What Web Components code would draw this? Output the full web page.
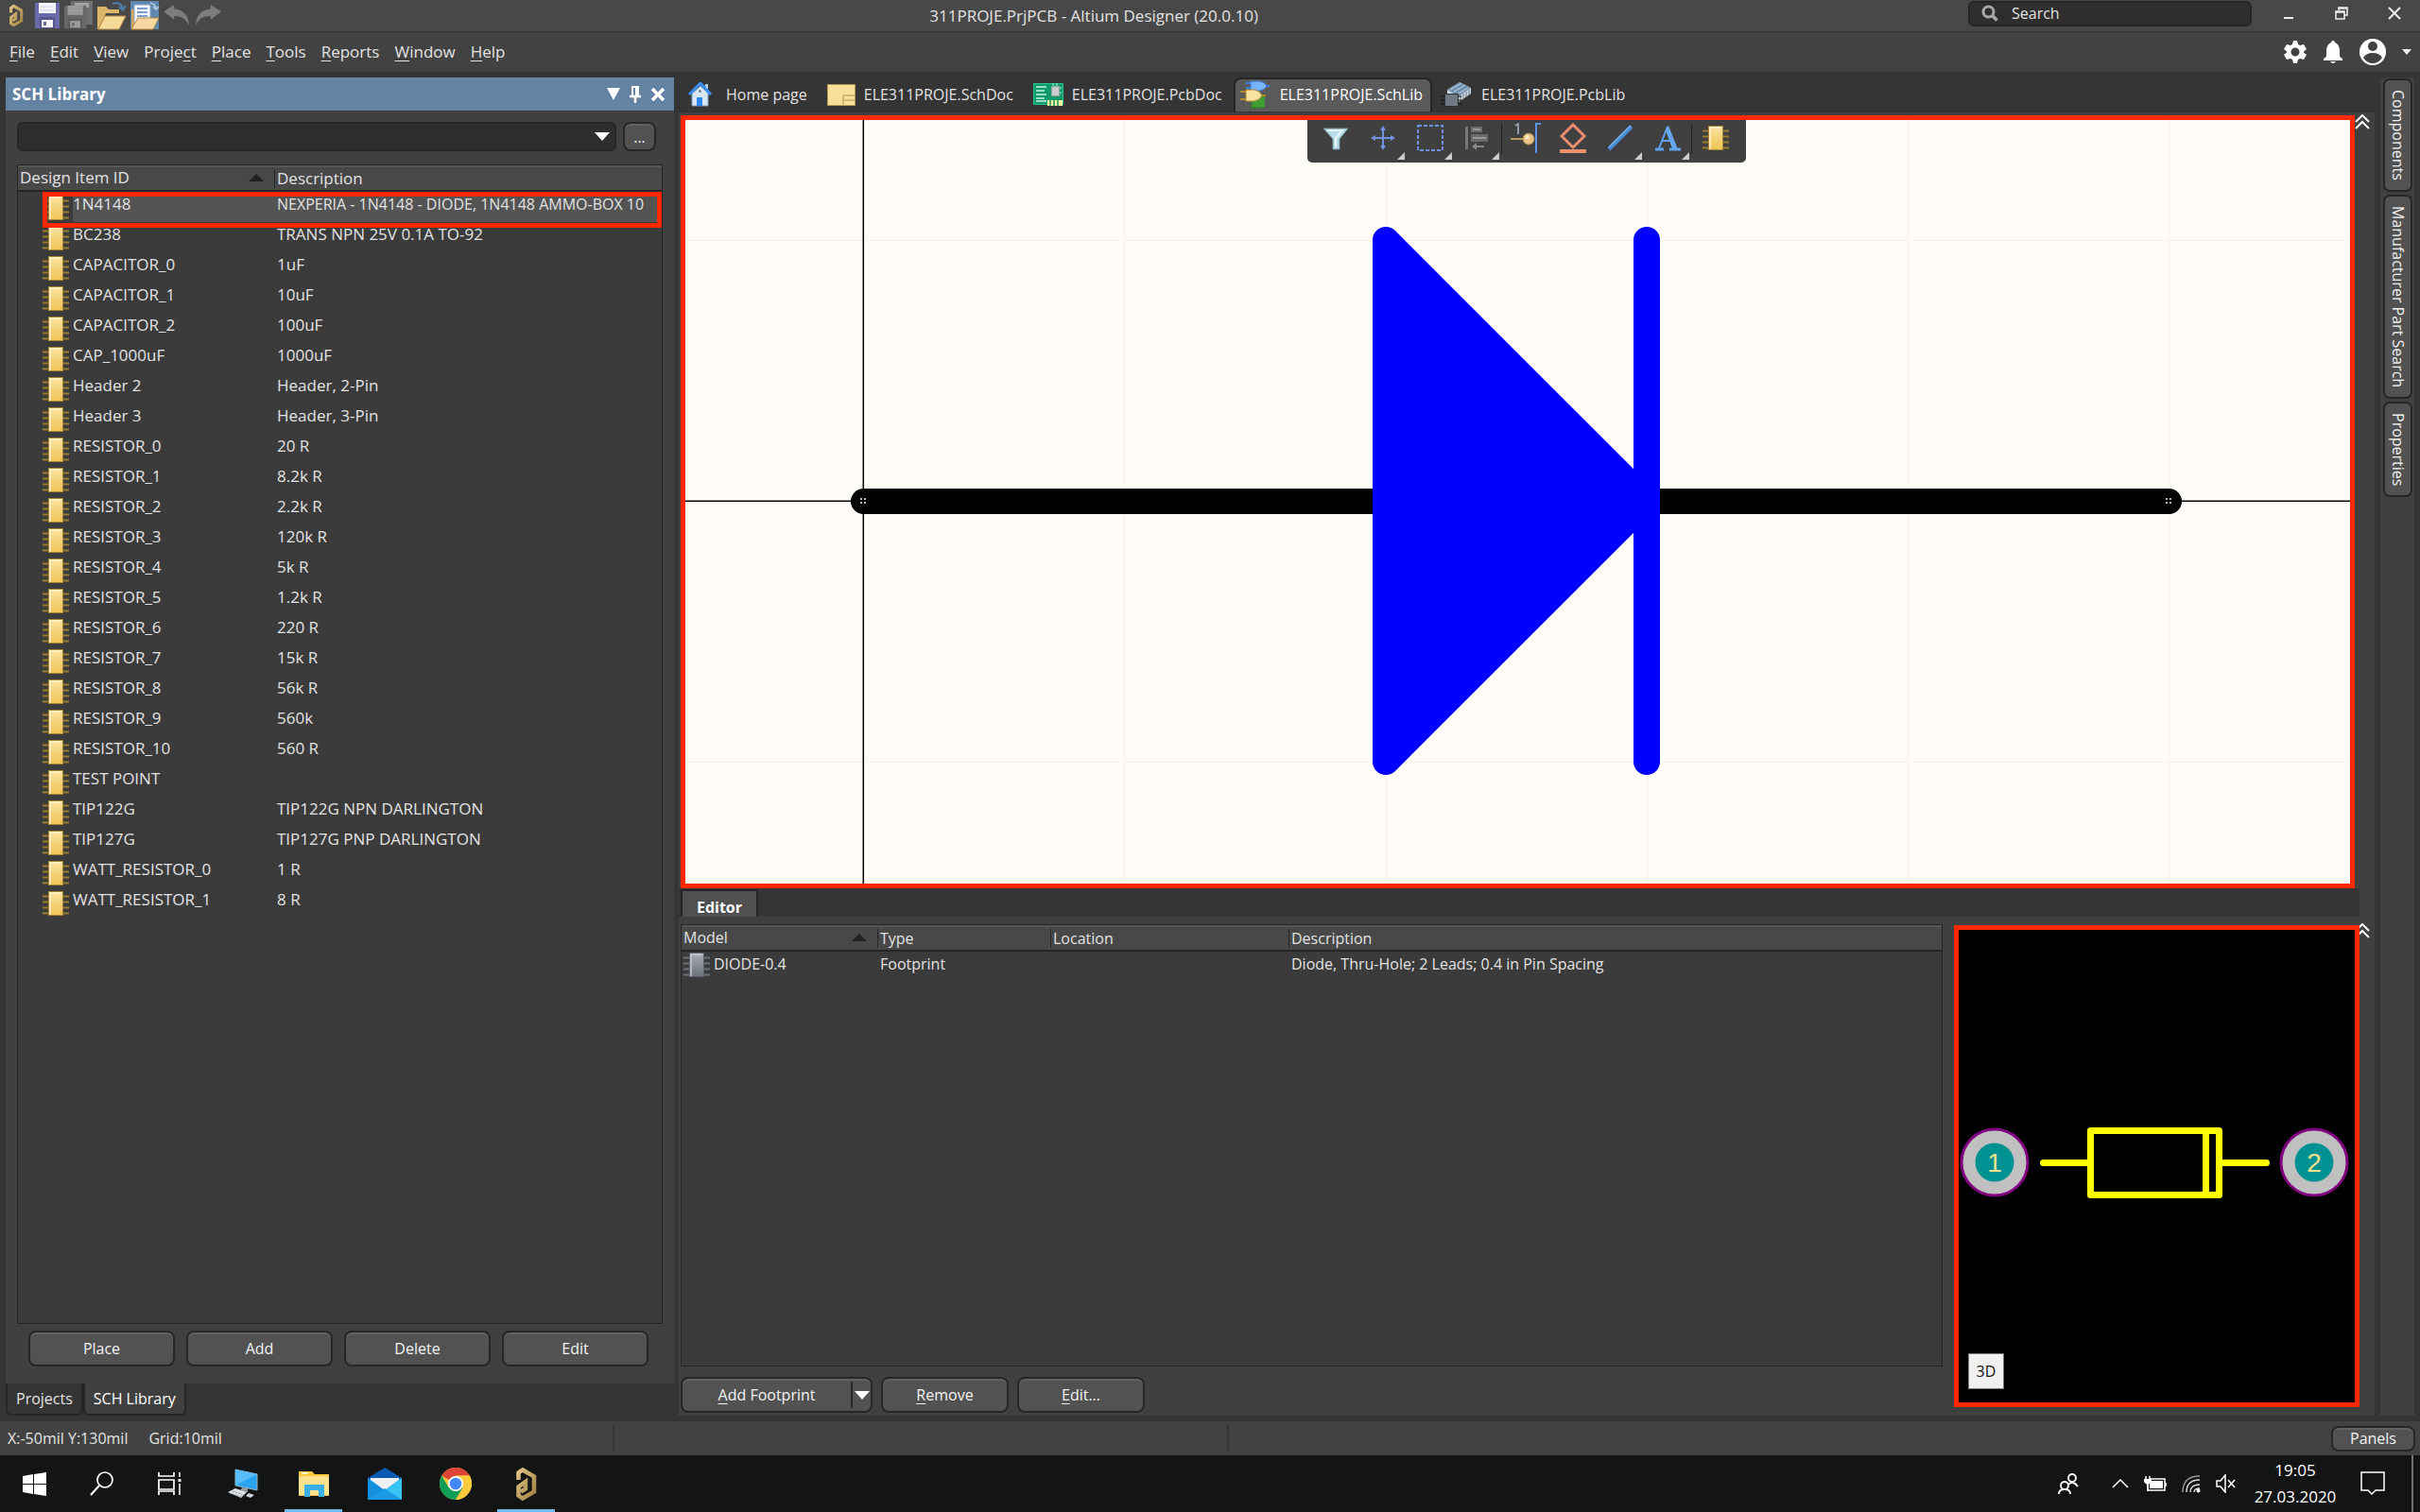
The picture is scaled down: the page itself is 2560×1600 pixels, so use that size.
<!DOCTYPE html>
<html lang="en">
<head>
<meta charset="utf-8">
<title>311PROJE.PrjPCB - Altium Designer (20.0.10)</title>
<style>
html,body{margin:0;height:100%}
body{font:16px/24px "Open Sans","Noto Sans",sans-serif;color:#e2e2e2;background:#353535}
</style>
</head>
<body>
<altium-app></altium-app>
<script>
const BASE = `
*{box-sizing:border-box}
button,input,select{font:inherit;color:inherit;margin:0;padding:0;border:0;background:none;outline:0}
button{display:inline-flex;align-items:center;justify-content:center;white-space:nowrap}
u{text-underline-offset:3px;text-decoration-thickness:1px}
table{border-collapse:separate;border-spacing:0;table-layout:fixed;width:100%}
th,td{padding:0;font-weight:400;text-align:left;vertical-align:top;white-space:nowrap;overflow:hidden}
`;
function define(name, css, html, after){
  const t = document.createElement('template');
  t.innerHTML = `<style>${BASE}${css}</style>${html}`;
  customElements.define(name, class extends HTMLElement{
    constructor(){
      super();
      this.attachShadow({mode:'open'}).append(t.content.cloneNode(true));
    }
    connectedCallback(){ if(after) after(this, this.shadowRoot); }
  });
}

const altium = `<defs><linearGradient id="g" x2="1" y2="1"><stop stop-color="#e0c585"/><stop offset="1" stop-color="#a08041"/></linearGradient></defs><path d="M3.500 14V6.500L8 3.500l12 7v16L8 33.500l-4.500-3v-9L11 16v7.500l-5 3" fill="none" stroke="url(#g)" stroke-width="4.500"/>`;
const chip = (pin,a,b,edge,hi) => `<defs><linearGradient id="c" x2="0" y2="1"><stop stop-color="${a}"/><stop offset="1" stop-color="${b}"/></linearGradient></defs><path d="M0 6.500h28M0 12.500h28M0 18.500h28M0 24.500h28" stroke="${pin}" stroke-width="2"/><rect x="6.500" y="1.500" width="15" height="25" fill="url(#c)" stroke="${edge}"/><path d="M8 26V3h12" fill="none" stroke="${hi}" stroke-width="1.500"/>`;
const floppy = (c,l,x) => `<path d="M1 1h26v27H1z" fill="${c}"/><path d="M5 1h18v11H5z" fill="${l}"/><path d="M7 5h14M7 9h14" stroke="${c}" stroke-opacity=".25"/><path d="M6 16h16v12H6z" fill="${x}"/><path d="M8 19h12v8H8z" fill="${l}"/><path d="M10 21h3v4h-3z" fill="${c}"/>`;
const folder = (b) => `<path d="M1 ${b}h9l3 3h11v4H10L3 30H1z" fill="#d9b66a"/><path d="M9 16h22l-7 14H2z" fill="#f6d899" stroke="#b28b41"/>`;
const ICONS = {
  altium:[16,25,altium,'0 0 23 37'],
  'altium-big':[23,37,altium],
  save:[28,29,floppy('#6b6bab','#f6f6fb','#55558f')],
  saveall:[32,31,`<path d="M8 0h23v25H8z" fill="#707070"/><path d="M12 2h15v5H12z" fill="#a5a5a5"/><g transform="translate(0 4) scale(.9)">${floppy('#686868','#9d9d9d','#5c5c5c')}</g>`],
  open:[32,31,`${folder(6)}<path d="M17 3q9-3 11 5M24 6l4 4 3-5" fill="none" stroke="#4e7fa8" stroke-width="2"/>`],
  openprj:[32,31,`<path d="M1 0h30v30H1z" fill="#5f86ad"/><path d="M2 9h4v20H2z" fill="#d5a55c"/><path d="M5 4h17v20H5z" fill="#f4f8ff" stroke="#8aa2cf"/><path d="M8 8h11M8 12h11M8 16h11" stroke="#5a7cc4" stroke-width="1.500"/><path d="M22 2q6 1 6 7M25 6l3 3 3-3" fill="none" stroke="#b9cce0" stroke-width="1.500"/><path d="M9 18h22l-6 12H2z" fill="#f9d7a0" stroke="#b28b41"/>`],
  undo:[30,26,`<path d="M1 9l12-8v5q16 1 17 19-5-12-17-11v4z" fill="#7d7d7d"/>`,'0 0 32 28'],
  redo:[30,26,`<path d="M31 9L19 1v5Q3 7 2 25q5-12 17-11v4z" fill="#7d7d7d"/>`,'0 0 32 28'],
  search:[18,18,`<circle cx="7.500" cy="7.500" r="5.500" fill="none" stroke="#a8a8a8" stroke-width="3"/><path d="M11.500 11.500l5 5" stroke="#a8a8a8" stroke-width="3.500"/>`],
  min:[14,14,`<path d="M2 12h10" stroke="#eee" stroke-width="2"/>`],
  restore:[14,14,`<path d="M4 4V1h9v8h-3" fill="none" stroke="#eee" stroke-width="1.500"/><path d="M1 5h9v8H1zM1 6h9M4 2h9" fill="none" stroke="#eee" stroke-width="1.500"/>`],
  close:[14,14,`<path d="M1 1l12 12M13 1L1 13" stroke="#eee" stroke-width="2"/>`],
  gear:[24,24,`<path fill-rule="evenodd" d="M10 0h4l1 4 2 1 4-1 3 5-3 2.500v1L24 15l-3 5-4-1-2 1-1 4h-4l-1-4-2-1-4 1-3-5 3-2.500v-1L0 9l3-5 4 1 2-1zM12 7.500a4.500 4.500 0 1 0 0 9 4.500 4.500 0 0 0 0-9z" fill="#fff"/>`],
  bell:[22,24,`<path d="M11 0q2 0 2 2 5 2 5 9v5q0 2 3 3v2H1v-2q3-1 3-3v-5q0-7 5-9 0-2 2-2zM8 22h6q-3 4-6 0z" fill="#fff"/>`],
  user:[28,28,`<circle cx="14" cy="14" r="14" fill="#fff"/><circle cx="14" cy="8" r="5" fill="#424242"/><path d="M4 20q3-5 10-5t10 5q-4 6-10 6T4 20z" fill="#424242"/>`],
  caret:[10,6,`<path d="M0 0h10L5 6z" fill="#eee"/>`],
  'caret-big':[16,9,`<path d="M0 0h16L8 9z" fill="#fff"/>`],
  dropdown:[14,13,`<path d="M0 0h14L7 13z" fill="#fff"/>`],
  pin:[12,20,`<path d="M2 1h8v11H2z" fill="#fff"/><path d="M4 3h2v8H4z" fill="#6483a3"/><path d="M0 12h12M6 12v7" stroke="#fff" stroke-width="2.500"/>`],
  x:[16,16,`<path d="M2 2l12 12M14 2L2 14" stroke="#fff" stroke-width="3.500"/>`],
  sort:[16,8,`<path d="M0 8h16L8 0z" fill="#202020"/>`],
  chip:[28,28,chip('#9c7d2e','#fbe2a0','#f0c455','#a88534','#fff3cf')],
  chipgrey:[28,28,chip('#6c727c','#a9acb5','#69707a','#596069','#c8cad0')],
  home:[26,26,`<path d="M4 12v13h17V12L13 4z" fill="#d9e7f5" stroke="#7d9cb8"/><path d="M18 2h3v8h-3z" fill="#bccad8"/><path d="M1 13L13 1l11 12" fill="none" stroke="#3b8ff0" stroke-width="3"/><path d="M9 16h6v9H9z" fill="#2e86ee"/><circle cx="12.500" cy="9.500" r="1.500" fill="#6d8499"/>`],
  sch:[30,23,`<path d="M.5.500h29v22H.5z" fill="#f8df97" stroke="#b99c55"/><path d="M17 22V12h12M17 17h12" fill="none" stroke="#b39448"/>`],
  pcb:[32,26,`<path d="M.5 1.500h31v22H.5z" fill="#0d9b6c" stroke="#2cc391"/><path d="M3 5h11M3 9h9M3 13h11M3 17h9M3 20h11" stroke="#c9f5df" stroke-width="1.500"/><path d="M19 4h9v11h-9z" fill="#c9ccce" stroke="#486"/><path d="M21 1v3M25 1v3M30 6h-2M30 11h-2" stroke="#9fe"/><path d="M15 19h16v6H15z" fill="#f2f6a0"/><path d="M18 19v6M22 19v6M26 19v6" stroke="#1a8a5a" stroke-width="1.500"/>`],
  schlib:[32,32,`<path d="M12 17h14v13H12z" fill="#3f9e34"/><path d="M12 18v12h14" fill="none" stroke="#2c7d25" stroke-width="2" stroke-dasharray="2 1.500"/><path d="M6 4h6M6 9h6M25 7h6" stroke="#3d7de0" stroke-width="2"/><path d="M11 2h10q5 1 7 5-2 4-7 5H11z" fill="#78b5ff" stroke="#3a7bdc"/><path d="M0 13h6M0 21h6M22 17h5" stroke="#b18a2c" stroke-width="2"/><path d="M6 11h9q6 1 8 6-2 5-8 6H6z" fill="#fae3a2" stroke="#b18a2c"/>`],
  pcblib:[34,28,`<path d="M7 9L20 1l12 6v6L19 22 7 15z" fill="#ccd7df"/><path d="M7 9L20 1l12 6-13 9z" fill="#6f8fae"/><path d="M10 9l12-7M14 11l12-7M17 14l12-7" stroke="#afc5d8" stroke-width="1.200"/><path d="M21 15v6M24 13v6M27 11v6M30 9v5" stroke="#6a7782"/><path d="M0 16h22M0 20h22M0 24h22" stroke="#111"/><path d="M4.500 13.500h14v13h-14z" fill="#707983" stroke="#2c2f33"/>`],
  filter:[28,28,`<path d="M1 4h26l-9 11v11h-7V15z" fill="#b9dde8" stroke="#7797a5"/><path d="M5 6h16l-7 8v10" fill="none" stroke="#e5f6fa" stroke-width="2"/>`],
  move:[28,28,`<path d="M14 3v22M3 14h22" stroke="#7291e0" stroke-width="2"/><path d="M14 1l-3 5h6zM14 27l-3-5h6zM1 14l5-3v6zM27 14l-5-3v6z" fill="#7291e0"/>`],
  select:[28,28,`<path d="M1 1h26v26H1z" fill="none" stroke="#7291e0" stroke-width="2" stroke-dasharray="4 2"/>`],
  align:[28,28,`<path d="M1 2h3v24H1z" fill="#777"/><path d="M7 2h12v6H7zM7 10h18v8H7z" fill="#6b6b6b"/><path d="M9 5h8M9 14h14" stroke="#999" stroke-width="2"/><path d="M8 23l5-4v3h8v2h-8v3z" fill="#888"/>`],
  pinplace:[32,32,`<path d="M0 17h18" stroke="#b39a62" stroke-width="2"/><circle cx="19" cy="17" r="6" fill="#e8c384" stroke="#a78a52"/><circle cx="17.500" cy="15" r="2.500" fill="#f6e3bd"/><path d="M27 32V1h5" fill="none" stroke="#5b91e8" stroke-width="2"/><path d="M5 3l3-2v11" fill="none" stroke="#8f9aa5" stroke-width="2"/>`],
  diamond:[28,32,`<path d="M14 2l12 12-12 12L2 14z" fill="none" stroke="#ec8f6d" stroke-width="3"/><path d="M0 30h28" stroke="#ec8f6d" stroke-width="4"/>`],
  line:[28,28,`<path d="M2 26L26 2" stroke="#4587cf" stroke-width="4"/><path d="M2 24L25 1" stroke="#6eabec" stroke-width="2"/>`],
  text:[28,28,`<path d="M14 2l9 22M14 2L5 25M8 17h11" stroke="#5fa3ee" stroke-width="2" fill="none"/><path d="M15 1l9 24h-5L12 6z" fill="#68a8f0"/><path d="M1 26h9M16 26h12" stroke="#5fa3ee" stroke-width="3"/>`],
  chevrons:[16,16,`<path d="M1 8l7-7 7 7M1 15l7-7 7 7" fill="none" stroke="#fff" stroke-width="2"/>`],
  win:[25,25,`<path d="M0 4l11-2v10H0zM12 2l13-2v12H12zM0 13h11v10L0 21zM12 13h13v12l-13-2z" fill="#fff"/>`],
  find:[26,26,`<circle cx="16" cy="9" r="8" fill="none" stroke="#fff" stroke-width="1.700"/><path d="M10 15L1 25" stroke="#fff" stroke-width="2"/>`],
  task:[26,24,`<path d="M1 0v4h16V0M1 8h16v10H1zM1 24v-4h16v4" fill="none" stroke="#fff" stroke-width="1.700"/><path d="M23 0v5M23 12v12" stroke="#fff" stroke-width="1.500"/><path d="M21.500 7h3v3h-3z" fill="#fff"/>`],
  pc:[34,32,`<path d="M9 1l23 5v17L9 18z" fill="#29a3f2" stroke="#9cb4c4"/><path d="M9 1l23 5L9 18z" fill="#59bcfa"/><path d="M16 20l6 1v4l-8-1z" fill="#909ba3"/><path d="M1 25l8-4 12 4-6 6z" fill="#dde2e6"/><path d="M3 26l13 4M6 24l12 4" stroke="#90979d" stroke-dasharray="2 1"/><path d="M23 26l6 2-4 3-5-2z" fill="#cfd5da"/>`],
  explorer:[32,27,`<path d="M0 0h14l3 3h15v23H0z" fill="#f8c83a"/><path d="M0 5h32v20H0z" fill="#ffe28d"/><path d="M3 2h7" stroke="#fff" stroke-width="1.500"/><path d="M6 27V14h21v13h-6v-7h-9v7z" fill="#39afe8"/>`],
  mail:[36,34,`<path d="M0 11L18 0l18 11v10H0z" fill="#0b5cb0"/><path d="M3 11h30v13H3z" fill="#f0f1f5"/><path d="M0 11l18 13L36 11v23H0z" fill="#1590e0"/><path d="M18 24l18-13v23z" fill="#38c4f5"/><path d="M0 34l18-12 18 12z" fill="#1b9ae8"/>`],
  chrome:[34,34,`<circle cx="17" cy="17" r="17" fill="#fbc93d"/><path d="M17 17L2.300 8.500A17 17 0 0 1 31.700 8.500H17z" fill="#db4437"/><path d="M2.300 8.500A17 17 0 0 0 17 34l7.400-12.500L17 17 9.600 21z" fill="#109d58"/><path d="M31.700 8.500A17 17 0 0 1 17 34l8-13-2-9-6-3.500z" fill="#fdcb3d"/><circle cx="17" cy="17" r="8" fill="#fff"/><circle cx="17" cy="17" r="6.300" fill="#4587f4"/>`],
  people:[22,24,`<g fill="none" stroke="#fff" stroke-width="1.800"><circle cx="15" cy="6" r="4"/><path d="M11 13q5-5 10 2"/><circle cx="7" cy="14" r="4"/><path d="M1 23q0-5 6-5t6 5"/></g>`],
  up:[18,10,`<path d="M1 9l8-8 8 8" fill="none" stroke="#fff" stroke-width="1.500"/>`],
  battery:[24,16,`<path d="M6 3h16v12H4V9" fill="none" stroke="#fff" stroke-width="1.500"/><path d="M8 5h12v8H6V9z" fill="#fff"/><path d="M23 7v4M2 0v4M6 0v4M4 8v8" stroke="#fff" stroke-width="1.500"/><path d="M0 3h8v3q-4 6-8 0z" fill="#fff"/>`],
  wifi:[20,20,`<g fill="none" stroke="#ddd" stroke-width="1.400"><path d="M1 19Q1 2 19 2" stroke="#999"/><path d="M5 19Q5 6 19 6"/><path d="M9 19q0-8 10-8"/><path d="M13 19q0-4 6-4"/></g><circle cx="17.500" cy="17.500" r="2" fill="#fff"/>`],
  mute:[22,20,`<path d="M1 7h4l5-6v18l-5-6H1zM13 6l7 8M20 6l-7 8" fill="none" stroke="#fff" stroke-width="1.500"/>`],
  note:[26,26,`<path d="M1 1h24v19H16l-4 4-4-4H1z" fill="none" stroke="#fff" stroke-width="1.500"/>`]
};
customElements.define('ui-icon', class extends HTMLElement{
  connectedCallback(){
    const [w,h,body,vb] = ICONS[this.getAttribute('name')];
    const root = this.shadowRoot || this.attachShadow({mode:'open'});
    root.innerHTML = `<style>:host{display:inline-flex;flex:none}svg{display:block}</style><svg width="${w}" height="${h}" viewBox="${vb||`0 0 ${w} ${h}`}" aria-hidden="true">${body}</svg>`;
  }
});

define('push-button', `
:host{display:flex;height:var(--h,38px)}
button{width:100%;border:2px solid #262626;border-radius:8px;background:#525252;box-shadow:inset 0 2px 1px #636363;color:#f2f2f2}
`, `<button type="button"><slot></slot></button>`);

define('title-bar', `
:host{display:grid;grid-template-columns:4fr auto 5fr;align-items:center;height:34px;background:#484848;border-bottom:1px solid #333}
.left{display:flex;align-items:center;gap:3px;padding-left:9px}
.left ui-icon:first-child{margin-right:8px}
h1{font:inherit;font-size:17px;margin:0}
.right{display:flex;align-items:center;justify-content:flex-end;gap:42px;padding:0 20px 5px 0}
label{display:flex;align-items:center;gap:14px;width:300px;height:27px;padding:0 12px;border:2px solid #262626;border-radius:6px;background:#2e2e2e;margin-right:-10px}
input{width:200px;height:22px;color:#e2e2e2}
input::placeholder{color:#e2e2e2;opacity:1}
`, `<div class="left"><ui-icon name="altium"></ui-icon><ui-icon name="save"></ui-icon><ui-icon name="saveall"></ui-icon><ui-icon name="open"></ui-icon><ui-icon name="openprj"></ui-icon><ui-icon name="undo"></ui-icon><ui-icon name="redo"></ui-icon></div>
<h1>311PROJE.PrjPCB - Altium Designer (20.0.10)</h1>
<div class="right"><label><ui-icon name="search"></ui-icon><input type="text" placeholder="Search" aria-label="Search"></label>
<button aria-label="Minimize"><ui-icon name="min"></ui-icon></button><button aria-label="Restore"><ui-icon name="restore"></ui-icon></button><button aria-label="Close"><ui-icon name="close"></ui-icon></button></div>`);

define('menu-bar', `
:host{display:flex;align-items:center;justify-content:space-between;height:42px;background:#424242;padding:0 9px 0 10px;font-size:17px}
nav{display:flex;gap:16px}
.acct{display:flex;align-items:center;gap:17px}
`, `<nav><button><span><u>F</u>ile</span></button><button><span><u>E</u>dit</span></button><button><span><u>V</u>iew</span></button><button><span>Proje<u>c</u>t</span></button><button><span><u>P</u>lace</span></button><button><span><u>T</u>ools</span></button><button><span><u>R</u>eports</span></button><button><span><u>W</u>indow</span></button><button><span><u>H</u>elp</span></button></nav>
<div class="acct"><button aria-label="Settings"><ui-icon name="gear"></ui-icon></button><button aria-label="Notifications"><ui-icon name="bell"></ui-icon></button><button aria-label="Account"><ui-icon name="user"></ui-icon></button><ui-icon name="caret"></ui-icon></div>`);

const PARTS = [
['1N4148','NEXPERIA - 1N4148 - DIODE, 1N4148 AMMO-BOX 10'],['BC238','TRANS NPN 25V 0.1A TO-92'],['CAPACITOR_0','1uF'],['CAPACITOR_1','10uF'],['CAPACITOR_2','100uF'],['CAP_1000uF','1000uF'],['Header 2','Header, 2-Pin'],['Header 3','Header, 3-Pin'],['RESISTOR_0','20 R'],['RESISTOR_1','8.2k R'],['RESISTOR_2','2.2k R'],['RESISTOR_3','120k R'],['RESISTOR_4','5k R'],['RESISTOR_5','1.2k R'],['RESISTOR_6','220 R'],['RESISTOR_7','15k R'],['RESISTOR_8','56k R'],['RESISTOR_9','560k'],['RESISTOR_10','560 R'],['TEST POINT',''],['TIP122G','TIP122G NPN DARLINGTON'],['TIP127G','TIP127G PNP DARLINGTON'],['WATT_RESISTOR_0','1 R'],['WATT_RESISTOR_1','8 R']];
const TABLE = `
.grid{position:relative;border:1px solid #262626;background:#3b3b3b;overflow:hidden}
th{height:28px;line-height:26px;background:#484848;border-bottom:2px solid #262626;box-shadow:inset 0 2px #555}
th>div{display:flex;align-items:center;justify-content:space-between;padding:0 11px 0 2px}
th+th>div{border-left:1px solid #262626;height:20px;margin-top:4px}
td{height:32px;line-height:26px;padding-left:3px}
`;
define('sch-library', `${TABLE}
:host{display:flex;flex-direction:column}
.panel{flex:1;display:flex;flex-direction:column;background:#404040}
header{display:flex;align-items:center;height:35px;background:#6483a3;color:#fff;padding:0 9px 0 7px;gap:10px}
h2{font:inherit;font-size:17px;font-weight:700;margin:0;flex:1}
.pick{display:flex;gap:7px;padding:12px 19px 14px 12px}
.combo{position:relative;flex:1;height:31px}
.combo select{appearance:none;width:100%;height:100%;border:2px solid #262626;border-radius:6px;background:#2e2e2e}
.combo ui-icon{position:absolute;right:7px;top:11px;pointer-events:none}
.pick push-button{--h:31px;width:35px}
.grid{flex:1;margin:0 12px 7px;font-size:17px}
.id{display:flex;gap:4px;height:32px;padding-left:26px}
.id ui-icon{padding-top:3px}
td.c{padding:0}
.sel .id span{flex:1;background:#545454}.sel td+td{background:#545454;font-size:16px}
.mark{position:absolute;left:26px;right:0;top:28px;height:38px;border:5px solid #ff2800}
.actions{display:grid;grid-template-columns:repeat(4,1fr);gap:12px;padding:0 27px 18px 24px}
.tabs{display:flex;height:40px}
.tabs button{height:34px;padding:0 9px;border:2px solid #262626;border-top:0;border-radius:0 0 6px 6px}
.tabs .on{background:#404040;color:#fff}
`, `<div class="panel"><header><h2>SCH Library</h2><button aria-label="Menu"><ui-icon name="dropdown"></ui-icon></button><button aria-label="Pin"><ui-icon name="pin"></ui-icon></button><button aria-label="Close"><ui-icon name="x"></ui-icon></button></header>
<div class="pick"><div class="combo"><select aria-label="Filter"><option></option></select><ui-icon name="caret-big"></ui-icon></div><push-button>...</push-button></div>
<div class="grid"><table><colgroup><col style="width:271px"><col></colgroup><thead><tr><th><div>Design Item ID<ui-icon name="sort"></ui-icon></div></th><th><div>Description</div></th></tr></thead><tbody></tbody></table><div class="mark"></div></div>
<div class="actions"><push-button>Place</push-button><push-button>Add</push-button><push-button>Delete</push-button><push-button>Edit</push-button></div></div>
<div class="tabs"><button>Projects</button><button class="on">SCH Library</button></div>`,
(host, root) => {
  root.querySelector('tbody').innerHTML = PARTS.map(([a,b],i) => `<tr${i?'':' class="sel"'}><td class="c"><div class="id"><ui-icon name="chip"></ui-icon><span>${a}</span></div></td><td>${b}</td></tr>`).join('');
});

define('doc-tabs', `
:host{display:flex;align-items:flex-end;height:43px;padding:0 0 1px 1px}
button{height:36px;padding:0 10px 2px 7px;gap:9px;border:2px solid transparent;border-bottom:0}
button.home{gap:14px}
button.on{background:#5a5a5a;border-color:#262626;border-radius:8px 8px 0 0;padding:0 8px 2px 5px;gap:10px;color:#fff}
`, `<button class="home"><ui-icon name="home"></ui-icon>Home page</button><button><ui-icon name="sch"></ui-icon>ELE311PROJE.SchDoc</button><button><ui-icon name="pcb"></ui-icon>ELE311PROJE.PcbDoc</button><button class="on"><ui-icon name="schlib"></ui-icon>ELE311PROJE.SchLib</button><button><ui-icon name="pcblib"></ui-icon>ELE311PROJE.PcbLib</button>`);

define('active-bar', `
:host{display:flex;height:45px;padding:0 7px 0 5px;background:#404040;border-radius:0 0 5px 5px}
button{position:relative;width:50px;height:38px}
button.t::after{content:"";position:absolute;right:2px;bottom:-4px;border:4px solid;border-color:transparent #ccc #ccc transparent}
i{width:1px;height:32px;margin-top:4px;background:#222}
`, `<button aria-label="Filter"><ui-icon name="filter"></ui-icon></button><button class="t" aria-label="Move"><ui-icon name="move"></ui-icon></button><button class="t" aria-label="Select"><ui-icon name="select"></ui-icon></button><button class="t" aria-label="Align"><ui-icon name="align"></ui-icon></button><i></i><button aria-label="Place pin"><ui-icon name="pinplace"></ui-icon></button><button aria-label="Place symbol"><ui-icon name="diamond"></ui-icon></button><button class="t" aria-label="Place line"><ui-icon name="line"></ui-icon></button><button class="t" aria-label="Place text"><ui-icon name="text"></ui-icon></button><i></i><button aria-label="Add part"><ui-icon name="chip"></ui-icon></button>`);

const dots = x => `<path d="M${x-3} 527h2v2h-2zM${x+1} 527h2v2h-2zM${x-3} 531h2v2h-2zM${x+1} 531h2v2h-2z" fill="#bbb"/>`;
define('schematic-canvas', `
:host{display:block;position:relative;border:5px solid #ff2800;background:#fffcf7;overflow:hidden;min-height:0}
svg{position:absolute;inset:0;width:100%;height:100%}
active-bar{position:absolute;top:0;left:50%;margin-left:-223px}
`, `<svg viewBox="725 127 1761 808" preserveAspectRatio="xMinYMin slice" aria-label="Diode symbol">
<path d="M1189.500 127v808M1466.500 127v808M1742.500 127v808M2018.500 127v808M2294.500 127v808M725 254.500h1761M725 806.500h1761" stroke="#f3f3f0"/>
<path d="M913.300 127v808M725 530.300h1761" stroke="#000" stroke-width="1.500"/>
<path d="M913.500 530.500h1381" stroke="#000" stroke-width="27" stroke-linecap="round"/>
${dots(913)}${dots(2294)}
<path d="M1466 254v552l276-276zM1742 254v552" fill="#00f" stroke="#00f" stroke-width="28" stroke-linejoin="round" stroke-linecap="round"/></svg><active-bar></active-bar>`);

define('model-editor', `${TABLE}
:host{display:flex;flex-direction:column}
.strip{height:30px;background:#353535;display:flex;padding:1px 0 0 2px}
.strip button{width:82px;background:#505050;border:2px solid #262626;border-bottom:0;font-weight:700;color:#fff;padding-top:6px}
.body{flex:1;display:grid;grid-template-columns:1fr 429px;gap:12px;padding:8px 0 3px 2px}
.left{display:flex;flex-direction:column;gap:11px}
.grid{flex:1}
.m{display:flex;gap:4px}
.actions{display:flex;gap:9px}
.actions push-button{width:135px}
.actions push-button:first-child{width:203px}
.split{display:flex;align-items:center;width:199px;height:30px}
.split span{flex:1;text-align:center}
.split b{display:flex;align-items:center;justify-content:center;width:21px;height:28px;border-left:2px solid #262626}
td:first-child{padding-left:2px}
footprint-view{margin:1px 0 6px}
`, `<div class="strip"><button>Editor</button></div>
<div class="body"><div class="left"><div class="grid"><table><colgroup><col style="width:207px"><col style="width:183px"><col style="width:252px"><col></colgroup><thead><tr><th><div>Model<ui-icon name="sort"></ui-icon></div></th><th><div>Type</div></th><th><div>Location</div></th><th><div>Description</div></th></tr></thead><tbody><tr><td><div class="m"><ui-icon name="chipgrey"></ui-icon>DIODE-0.4</div></td><td>Footprint</td><td></td><td>Diode, Thru-Hole; 2 Leads; 0.4 in Pin Spacing</td></tr></tbody></table></div>
<div class="actions"><push-button><div class="split"><span><u>A</u>dd Footprint</span><b><ui-icon name="caret-big"></ui-icon></b></div></push-button><push-button><span><u>R</u>emove</span></push-button><push-button><span><u>E</u>dit...</span></push-button></div></div>
<footprint-view></footprint-view></div>`);

define('footprint-view', `
:host{display:block;position:relative;border:5px solid #ff2800;background:#000;overflow:hidden}
svg{position:absolute;inset:0;width:100%;height:100%}
text{font:28px "Liberation Sans",sans-serif;fill:#f3e08a;text-anchor:middle}
button{position:absolute;left:10px;bottom:14px;width:38px;height:38px;background:#f0f0f0;border:1px solid #777;color:#111}
`, `<svg viewBox="2072 984 419 500"><g fill="#c0c0c0" stroke="#800080" stroke-width="3"><circle cx="2110" cy="1230" r="35"/><circle cx="2448" cy="1230" r="35"/></g>
<g fill="#009292"><circle cx="2110" cy="1230" r="20.500"/><circle cx="2448" cy="1230" r="20.500"/></g>
<path d="M2161.500 1230.500h50M2347.500 1230.500h50M2211.500 1196.500h136v68h-136zM2333.500 1196.500v68" fill="none" stroke="#ff0" stroke-width="7" stroke-linecap="round" stroke-linejoin="round"/>
<text x="2110" y="1240">1</text><text x="2448" y="1240">2</text></svg><button>3D</button>`);

define('side-tabs', `
:host{display:flex;flex-direction:column;gap:3px;background:#404040;padding:1px 2px 0 3px}
button{width:31px;border:2px solid #262626;border-radius:7px;background:#525252;padding:10px 0;color:#f2f2f2}
span{writing-mode:vertical-rl}
`, `<button><span>Components</span></button><button><span>Manufacturer Part Search</span></button><button><span>Properties</span></button>`);

define('status-bar', `
:host{display:grid;grid-template-columns:650px 650px 1fr;align-items:center;height:36px;background:#424242}
div{height:28px;border-right:2px solid #353535;display:flex;align-items:center;gap:22px;padding-left:8px}
.end{border:0;justify-content:flex-end;padding-right:5px}
push-button{--h:27px;width:89px}
`, `<div><span>X:-50mil Y:130mil</span><span>Grid:10mil</span></div><div></div><div class="end"><push-button>Panels</push-button></div>`);

define('task-bar', `
:host{display:flex;justify-content:space-between;height:60px;background:#131414;color:#fff}
.apps{display:flex}
.apps button{width:72px}
.apps .app{width:61px;margin:0 7px;border-bottom:3px solid transparent;padding-top:3px}
.apps .app:nth-child(4){margin-left:10px}
.apps .on{border-color:#76b9ed}
.tray{display:flex;align-items:center;padding-right:7px}
.tray>*{margin-right:16px}
.tray button:first-child{margin-right:35px}
.tray time{text-align:center;font-size:17px;line-height:28px;width:92px;margin-right:23px}
time span{display:block}
.tray button:last-of-type{margin-right:28px}
.tray .peek{width:2px;height:60px;background:#707070;margin:0}
`, `<div class="apps"><button aria-label="Start"><ui-icon name="win"></ui-icon></button><button aria-label="Search"><ui-icon name="find"></ui-icon></button><button aria-label="Task view"><ui-icon name="task"></ui-icon></button><button class="app" aria-label="This PC"><ui-icon name="pc"></ui-icon></button><button class="app on" aria-label="File Explorer"><ui-icon name="explorer"></ui-icon></button><button class="app" aria-label="Mail"><ui-icon name="mail"></ui-icon></button><button class="app" aria-label="Chrome"><ui-icon name="chrome"></ui-icon></button><button class="app on" aria-label="Altium"><ui-icon name="altium-big"></ui-icon></button></div>
<div class="tray"><button aria-label="People"><ui-icon name="people"></ui-icon></button><ui-icon name="up"></ui-icon><ui-icon name="battery"></ui-icon><ui-icon name="wifi"></ui-icon><ui-icon name="mute"></ui-icon><time><span>19:05</span><span>27.03.2020</span></time><button aria-label="Notifications"><ui-icon name="note"></ui-icon></button><div class="peek"></div></div>`);

define('altium-app', `
:host{display:flex;flex-direction:column;min-height:100vh}
main{flex:1;display:grid;grid-template-columns:707px 1fr 37px;gap:5px;padding:0 6px}
sch-library{padding-top:6px}
side-tabs{margin:6px 0 6px 1px}
.work{display:flex;flex-direction:column;padding-bottom:6px}
.docs{flex:1;background:#404040;display:grid;grid-template-columns:1fr 16px;grid-template-rows:819fr 558fr;padding:2px 5px 0 0}
schematic-canvas{margin:1px 0 0 2px}
model-editor{margin-right:-5px}
.docs>ui-icon:last-child{padding-top:37px}
`, `<title-bar></title-bar><menu-bar></menu-bar><main><sch-library></sch-library><div class="work"><doc-tabs></doc-tabs><div class="docs"><schematic-canvas></schematic-canvas><ui-icon name="chevrons"></ui-icon><model-editor></model-editor><ui-icon name="chevrons"></ui-icon></div></div><side-tabs></side-tabs></main><status-bar></status-bar><task-bar></task-bar>`);
</script>
</body>
</html>
